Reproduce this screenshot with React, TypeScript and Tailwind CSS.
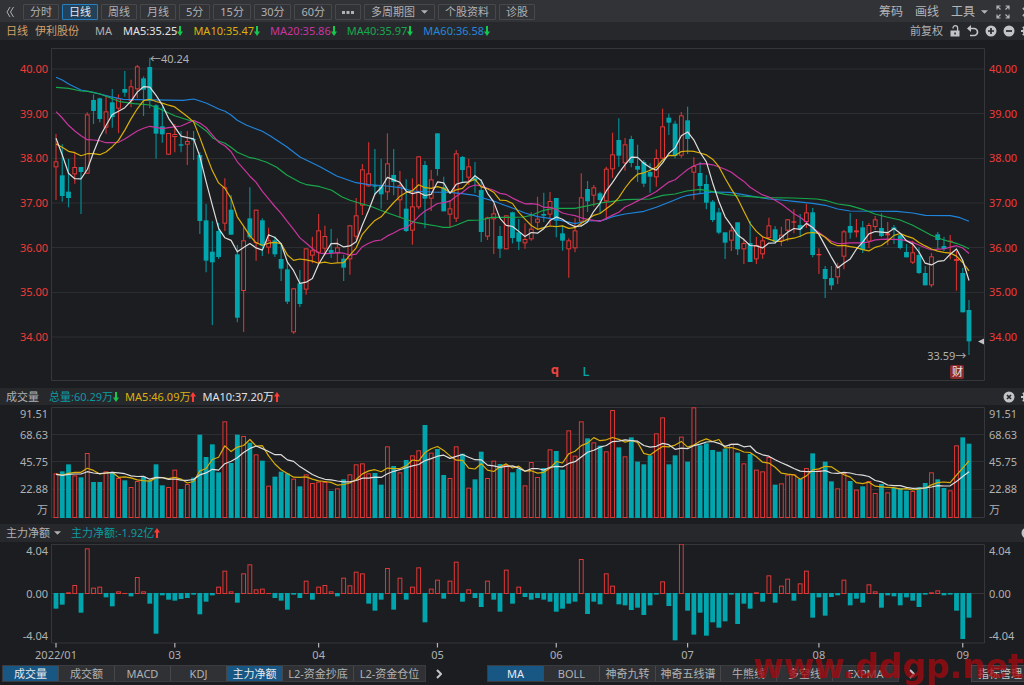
import type { ReactNode } from "react";

type Row = [dir: string, high: number, top: number, bottom: number, low: number];

type Candle = {
  up: boolean;
  high: number;
  top: number;
  bottom: number;
  low: number;
};

const STEP = 6.2534;
const FIRST_X = 56;

const xAt = (i: number) => FIRST_X + i * STEP;

// rows are kept at three units per pixel, counted from the block's own base
function block(base: number, rows: Row[]): Candle[] {
  return rows.map(([dir, high, top, bottom, low]) => ({
    up: dir === "r",
    high: base + high / 3,
    top: base + top / 3,
    bottom: base + bottom / 3,
    low: base + low / 3,
  }));
}

const CANDLES: Candle[] = [
  ...block(45, [
    ["r", 267, 349, 367, 465], ["g", 298, 391, 453, 470], ["g", 342, 440, 459, 487],
    ["r", 320, 366, 388, 416], ["g", 366, 366, 381, 507], ["r", 202, 208, 386, 386],
    ["g", 148, 165, 198, 237], ["g", 158, 160, 222, 232], ["r", 150, 199, 248, 266],
    ["g", 132, 172, 216, 248], ["r", 148, 160, 191, 264], ["g", 78, 132, 143, 155],
    ["r", 104, 124, 168, 187], ["r", 60, 64, 133, 160], ["g", 94, 100, 134, 213],
    ["g", 38, 66, 168, 190], ["g", 178, 181, 266, 341], ["g", 185, 244, 268, 293],
    ["r", 264, 264, 329, 329], ["r", 237, 267, 276, 322], ["g", 258, 298, 302, 322],
    ["r", 258, 288, 299, 360], ["g", 258, 282, 286, 345], ["g", 322, 330, 528, 567],
    ["g", 477, 526, 647, 682], ["g", 528, 620, 652, 840], ["g", 534, 558, 636, 642],
    ["r", 400, 427, 536, 558], ["g", 450, 494, 569, 569], ["g", 600, 628, 818, 832],
    ["r", 546, 586, 738, 861], ["g", 427, 520, 577, 582], ["r", 494, 494, 594, 647],
    ["g", 520, 526, 602, 633], ["r", 548, 586, 608, 626], ["g", 574, 586, 628, 636],
  ]),
  ...block(100, [
    ["g", 432, 477, 506, 543], ["g", 490, 508, 605, 612], ["r", 565, 565, 697, 702],
    ["g", 510, 550, 612, 621], ["r", 445, 445, 569, 584], ["r", 410, 451, 467, 490],
    ["r", 342, 391, 458, 490], ["r", 377, 408, 446, 466], ["g", 387, 450, 459, 474],
    ["r", 415, 442, 460, 488], ["g", 464, 476, 503, 543], ["r", 376, 376, 478, 524],
    ["r", 294, 346, 410, 420], ["r", 192, 208, 317, 345], ["r", 127, 220, 259, 260],
    ["g", 147, 256, 260, 286], ["g", 176, 259, 283, 326], ["r", 100, 190, 277, 300],
    ["g", 147, 225, 246, 286], ["r", 213, 256, 301, 353], ["g", 238, 326, 393, 396],
    ["r", 235, 319, 392, 434], ["r", 169, 169, 322, 328], ["g", 183, 195, 296, 385],
    ["r", 210, 238, 296, 333], ["g", 100, 100, 207, 227], ["g", 230, 262, 334, 334],
    ["r", 300, 325, 344, 382], ["r", 150, 160, 356, 366], ["g", 168, 171, 210, 246],
    ["r", 176, 199, 233, 255], ["g", 186, 233, 242, 279], ["g", 237, 270, 396, 426],
    ["r", 350, 352, 410, 420], ["r", 312, 340, 358, 462], ["g", 378, 408, 446, 474],
  ]),
  ...block(90, [
    ["r", 376, 376, 478, 478], ["g", 365, 367, 444, 460], ["g", 387, 427, 455, 480],
    ["r", 400, 447, 460, 476], ["r", 367, 416, 448, 452], ["r", 320, 386, 398, 418],
    ["g", 308, 372, 377, 396], ["r", 306, 333, 374, 408], ["g", 324, 324, 392, 442],
    ["g", 406, 430, 452, 482], ["r", 445, 451, 478, 563], ["r", 385, 421, 475, 487],
    ["r", 250, 322, 395, 410], ["g", 273, 297, 334, 366], ["r", 285, 292, 317, 350],
    ["g", 305, 310, 330, 370], ["r", 230, 236, 334, 390], ["r", 128, 193, 238, 264],
    ["g", 85, 150, 197, 230], ["r", 144, 163, 220, 242], ["g", 137, 147, 219, 232],
    ["g", 164, 228, 239, 276], ["g", 210, 216, 281, 291], ["g", 220, 246, 260, 308],
    ["r", 178, 204, 262, 290], ["r", 56, 109, 206, 206], ["g", 71, 83, 98, 135],
    ["g", 92, 101, 198, 205], ["r", 66, 76, 197, 203], ["g", 50, 91, 147, 192],
    ["r", 202, 228, 248, 329], ["g", 216, 249, 288, 312], ["g", 255, 282, 338, 358],
    ["g", 330, 335, 390, 396], ["g", 354, 367, 428, 433], ["g", 427, 427, 458, 507],
    ["r", 410, 421, 452, 483], ["g", 397, 397, 478, 495],
  ]),
  ...block(170, [
    ["r", 206, 219, 238, 282], ["g", 153, 219, 276, 276], ["r", 201, 225, 268, 282],
    ["r", 198, 211, 253, 266], ["r", 143, 166, 204, 208], ["g", 168, 178, 216, 222],
    ["r", 170, 194, 212, 228], ["r", 147, 148, 182, 214], ["r", 118, 154, 158, 190],
    ["g", 132, 165, 178, 202], ["r", 102, 127, 156, 174], ["g", 114, 127, 255, 262],
    ["r", 235, 252, 256, 312], ["g", 288, 297, 327, 384], ["g", 288, 324, 346, 360],
    ["r", 278, 289, 322, 342], ["r", 180, 184, 260, 298], ["g", 129, 168, 188, 206],
    ["r", 147, 181, 187, 202], ["g", 153, 172, 240, 249], ["r", 159, 165, 215, 235],
    ["r", 138, 148, 171, 180], ["g", 130, 174, 198, 202], ["r", 156, 190, 196, 226],
    ["g", 165, 172, 178, 222], ["g", 190, 196, 234, 238], ["g", 222, 246, 262, 262],
    ["r", 212, 247, 278, 282], ["g", 232, 255, 309, 312], ["g", 288, 309, 346, 346],
    ["r", 249, 259, 346, 352], ["g", 186, 193, 210, 236], ["g", 200, 228, 237, 243],
    ["r", 195, 212, 216, 268], ["r", 243, 267, 273, 362], ["g", 294, 309, 427, 427],
    ["g", 390, 420, 514, 555],
  ]),
];

const VOLUMES = [
  265, 259, 238, 271, 277, 204, 291, 291, 259, 264, 279, 286, 306, 288, 275, 286, 238, 301, 306, 254,
  312, 297, 278, 149, 216, 178, 262, 109, 234, 149, 153, 173, 208, 227, 302, 275, 260, 265, 281, 304,
  268, 294, 290, 291, 318, 310, 283, 268, 238, 235, 265, 264, 299, 184, 243, 262, 225, 211, 196, 120,
  203, 192, 270, 279, 184, 206, 308, 283, 200, 279, 227, 237, 240, 262, 252, 301, 231, 276, 249, 193,
  198, 254, 136, 212, 109, 160, 172, 182, 199, 75, 187, 214, 157, 230, 238, 211, 145, 97, 238, 211,
  155, 230, 67, 181, 175, 195, 200, 191, 176, 203, 235, 207, 254, 259, 216, 299, 295, 269, 268, 282,
  249, 205, 254, 230, 289, 310, 264, 288, 314, 304, 288, 324, 297, 322, 309, 309, 317, 318, 307, 294,
  262, 283, 309, 316, 181, 157, 176,
].map((v) => 385 + v / 3);

const NET_FLOWS = [
  251, 239, 202, 180, 263, 70, 188, 185, 217, 244, 199, 204, 214, 156, 199, 236, 326, 211, 224, 227,
  222, 219, 209, 268, 230, 211, 185, 137, 199, 233, 145, 118, 193, 191, 204, 219, 227, 254, 209, 219,
  167, 224, 185, 180, 199, 214, 158, 181, 140, 145, 236, 257, 224, 129, 254, 158, 224, 185, 127, 292,
  191, 164, 221, 167, 110, 230, 193, 219, 246, 167, 224, 260, 134, 236, 185, 216, 224, 219, 224, 230,
  260, 251, 236, 230, 102, 267, 230, 238, 145, 182, 238, 241, 255, 248, 270, 241, 209, 169, 243, 346,
  56, 257, 329, 263, 332, 292, 308, 289, 209, 297, 236, 251, 202, 230, 151, 233, 182, 161, 227, 175,
  137, 278, 217, 272, 216, 211, 164, 241, 221, 233, 178, 199, 248, 211, 214, 241, 217, 227, 246, 209,
  202, 196, 211, 209, 257, 342, 278,
].map((v) => 525 + v / 3);

const MA40 =
  "56,87.3 68.7,88.3 81,91 88.3,91.3 100,94 110,97.7 120,101.7 134.3,103.7 150,105 160,109 174.7,115.7 193.7,121.7 206,130.7 213.3,138.3 218.7,141 225,143.3 231,147.3 237.3,152.3 250,157.7 256,158.7 266.7,162.3 276.7,167.3 286.7,175 300,182.3 306.7,184.7 320,186.7 331.7,190.3 341.7,196.7 350,200.3 360,203.3 370,206 380,210 390,213.7 400,217.3 410,220.7 416.7,222.7 426.7,224.3 436.7,226 443.3,227.3 450,227.3 456.7,225 468.3,220.3 481.3,220 491.7,217.3 510,217.3 523.3,217 531.3,215.3 543.7,210.3 553.3,208.3 575,208.3 588.3,205.7 600,203 612.7,201.3 625,199.7 650,199 662.7,195.3 675,194 686.7,191 700,189.3 712.7,191.7 725,194.3 740,196 750,196.7 763,197.7 793,198 816.7,199 826.7,200.7 837.7,204 850,205.7 862.7,209.3 875,214 886.7,217 900,220 912.7,225.3 931.3,235.3 944,240 956.3,243.3 963.3,246 969,248.7";

const MA60 =
  "56,77.3 62.3,80 68.7,84 74.7,87 81,90 93.3,92.3 110,96.7 123.3,99.3 183.3,100.3 193.7,99 200,101 206.7,103.3 218.7,109 225,111.3 231,115 237.3,120.3 246.7,125.3 262.3,131.3 270,135.7 286.7,146.7 300,157 320,166.7 336.7,176 356,182.7 368.7,184.7 386.7,186 400,187.7 412.3,191 431.3,192 450,192.3 462.3,193.7 475,195.3 481.3,197.7 493.7,201 503.3,204.7 512.3,208 525,213 537.7,216.7 556.3,219.3 575,223.7 587.7,221 603.3,220.3 612.7,216.7 625,214 644,211.3 656.3,207.3 669,202.3 681.3,197.3 687.7,195.3 700,193.7 713.3,192 730,192.3 743.3,194.7 756.7,197 769,199 781.3,200 794,201.3 812.7,203.3 825.3,205.3 837.7,209 850,211 896.7,211.3 912.7,213 925.3,215.3 950.3,215.7 960,217.7 969,221.3";

// seed holds the points for which there is not enough history yet
function average(values: number[], n: number, base: number, seed: number[]) {
  return values
    .map((_, i) => {
      const y =
        i < n - 1
          ? base + seed[i] / 3
          : values.slice(i - n + 1, i + 1).reduce((a, b) => a + b, 0) / n;
      return `${xAt(i).toFixed(1)},${y.toFixed(1)}`;
    })
    .join(" ");
}

const CLOSES = CANDLES.map((c) => (c.up ? c.top : c.bottom));

const PRICE_LINES = [
  { color: "#1e84dc", points: MA60 },
  { color: "#17a84c", points: MA40 },
  {
    color: "#c9359f",
    points: average(CLOSES, 20, 45, [
      200, 219, 241, 258, 272, 284, 285, 287, 293, 293, 292, 282, 270, 258, 250, 244, 247, 251, 248,
    ]),
  },
  {
    color: "#d9ae0a",
    points: average(CLOSES, 10, 45, [297, 307, 319, 323, 332, 326, 326, 329, 321]),
  },
  { color: "#dedede", points: average(CLOSES, 5, 45, [280, 330, 385, 401]) },
];

const VOLUME_LINES = [
  { color: "#d9ae0a", points: average(VOLUMES, 5, 385, [267, 270, 265, 262]) },
  {
    color: "#dedede",
    points: average(VOLUMES, 10, 385, [268, 271, 268, 267, 267, 260, 264, 266, 264]),
  },
];

const MONTHS = [
  { i: 0, label: "2022/01" },
  { i: 19, label: "03" },
  { i: 42, label: "04" },
  { i: 61, label: "05" },
  { i: 80, label: "06" },
  { i: 101, label: "07" },
  { i: 122, label: "08" },
  { i: 145, label: "09" },
];

const PRICES = ["40.00", "39.00", "38.00", "37.00", "36.00", "35.00", "34.00"];
const VOLUME_TICKS = ["91.51", "68.63", "45.75", "22.88", "万"];
const FLOW_TICKS = ["4.04", "0.00", "-4.04"];

const PERIODS = ["分时", "日线", "周线", "月线", "5分", "15分", "30分", "60分"];

const LEGEND = [
  { text: "MA5:35.25", className: "text-[#e2e2e2]" },
  { text: "MA10:35.47", className: "text-[#dcb10c]" },
  { text: "MA20:35.86", className: "text-[#c9359f]" },
  { text: "MA40:35.97", className: "text-[#18a84c]" },
  { text: "MA60:36.58", className: "text-[#2388dc]" },
];

const LEFT_TABS = [
  { label: "成交量", active: true, width: "w-14" },
  { label: "成交额", width: "w-14" },
  { label: "MACD", width: "w-14" },
  { label: "KDJ", width: "w-14" },
  { label: "主力净额", active: true, width: "w-14" },
  { label: "L2-资金抄底", width: "w-[71px]" },
  { label: "L2-资金仓位", width: "w-[71px]" },
];

const RIGHT_TABS = [
  { label: "MA", active: true, width: "w-14" },
  { label: "BOLL", width: "w-14" },
  { label: "神奇九转", width: "w-14" },
  { label: "神奇五线谱", width: "w-[65px]" },
  { label: "牛熊线", width: "w-14" },
  { label: "多空线", width: "w-14" },
  { label: "EXPMA", width: "w-[65px]" },
];

function Trend({ up }: { up?: boolean }) {
  return (
    <svg
      viewBox="0 0 6 12"
      className={`h-3 w-1.5 shrink-0 ${up ? "rotate-180 text-[#ff3b35]" : "text-[#14c74f]"}`}
      aria-hidden
    >
      <path d="M2 1h2v5.500h2L3 11 0 6.500h2z" fill="currentColor" />
    </svg>
  );
}

function Caret() {
  return (
    <svg viewBox="0 0 8 4" className="h-1 w-[7px]" aria-hidden>
      <path d="M0 0h8L4 4z" fill="currentColor" />
    </svg>
  );
}

function Chevron() {
  return (
    <svg viewBox="0 0 6 10" className="h-2.5 w-1.5" aria-hidden>
      <path d="M1 1l4 4-4 4" fill="none" stroke="currentColor" strokeWidth="2" />
    </svg>
  );
}

function Gear() {
  return (
    <svg viewBox="0 0 12 12" className="h-3 w-3" aria-hidden>
      <circle cx="6" cy="6" r="3.300" fill="none" stroke="currentColor" strokeWidth="2" />
      <path
        d="M6 0v2.500M6 9.500V12M0 6h2.500M9.500 6H12M1.800 1.800l1.700 1.700M8.500 8.500l1.700 1.700M10.200 1.800L8.500 3.500M3.500 8.500l-1.700 1.700"
        stroke="currentColor"
        strokeWidth="1.800"
      />
    </svg>
  );
}

function RoundIcon({ path }: { path: string }) {
  return (
    <svg viewBox="0 0 12 12" className="h-3 w-3" aria-hidden>
      <circle cx="6" cy="6" r="5.500" fill="currentColor" />
      <path d={path} stroke="#27282c" strokeWidth="1.700" fill="none" />
    </svg>
  );
}

function IconButton({ label, children }: { label: string; children: ReactNode }) {
  return (
    <button type="button" aria-label={label} className="flex shrink-0 items-center">
      {children}
    </button>
  );
}

function Toolbar() {
  const base =
    "flex h-4 items-center justify-center rounded-[1px] border px-1.5 whitespace-nowrap";
  const idle = "border-[#47484c] text-[#b0b1b3]";

  return (
    <div className="flex h-[22px] items-center justify-between bg-[#323337] pt-0.5">
      <div className="flex items-center gap-[3px] pl-1.5">
        <IconButton label="收起">
          <svg viewBox="0 0 8 12" className="mr-1.5 h-3 w-2" aria-hidden>
            <path d="M4 1L1 6l3 5M7.500 1l-3 5 3 5" fill="none" stroke="#b0b1b3" />
          </svg>
        </IconButton>
        {PERIODS.map((period) => (
          <button
            key={period}
            type="button"
            className={`${base} ${
              period === "日线" ? "border-[#2480c0] bg-[#22415a] text-[#e4e8ec]" : idle
            }`}
          >
            {period}
          </button>
        ))}
        <button type="button" aria-label="更多周期" className={`${base} ${idle}`}>
          <svg viewBox="0 0 12 3" className="h-[3px] w-3" aria-hidden>
            <path d="M0 0h3v3H0zM4.500 0h3v3h-3zM9 0h3v3H9z" fill="currentColor" />
          </svg>
        </button>
        <button type="button" className={`${base} ${idle} gap-1.5`}>
          多周期图
          <Caret />
        </button>
        <button type="button" className={`${base} ${idle}`}>
          个股资料
        </button>
        <button type="button" className={`${base} ${idle}`}>
          诊股
        </button>
      </div>
      <div className="-mr-1 flex items-center gap-3 text-xs text-[#b4b5b7]">
        <button type="button">筹码</button>
        <button type="button">画线</button>
        <button type="button" className="flex items-center gap-1.5">
          工具
          <Caret />
        </button>
        <div className="flex items-center gap-3">
          <IconButton label="全屏">
            <svg viewBox="0 0 14 14" className="-ml-1 h-3.5 w-3.5" aria-hidden>
              <path
                d="M1 4.500V1h3.500M1 1l3.500 3.500M9.500 1H13v3.500M13 1L9.500 4.500M1 9.500V13h3.500M1 13l3.500-3.500M13 9.500V13H9.500M13 13L9.500 9.500"
                fill="none"
                stroke="currentColor"
                strokeWidth="1.200"
              />
            </svg>
          </IconButton>
          <IconButton label="展开">
            <Chevron />
          </IconButton>
        </div>
      </div>
    </div>
  );
}

function Legend() {
  return (
    <div className="flex h-[18px] items-center justify-between bg-[#27282c]">
      <div className="flex items-center whitespace-nowrap pl-1.5">
        <span className="mr-[7px] text-[#d3a06c]">日线</span>
        <span className="mr-4 text-[#d3a06c]">伊利股份</span>
        <span className="mr-[11px]">MA</span>
        <div className="flex gap-2.5">
          {LEGEND.map((item) => (
            <span key={item.text} className={`flex items-center ${item.className}`}>
              {item.text}
              <Trend />
            </span>
          ))}
        </div>
      </div>
      <div className="-mr-[9px] flex items-center gap-1.5 text-[#c3c4c6]">
        <button type="button" className="text-[#b0b1b3]">
          前复权
        </button>
        <IconButton label="锁定">
          <svg viewBox="0 0 12 12" className="h-3 w-3" aria-hidden>
            <path d="M1.500 5.500h9v6h-9z" fill="currentColor" />
            <path d="M4 3.500V3a2.300 2.300 0 0 1 4.600 0v3" fill="none" stroke="currentColor" strokeWidth="1.300" />
            <path d="M5.300 7.500h1.500v2H5.300z" fill="#27282c" />
          </svg>
        </IconButton>
        <IconButton label="撤销">
          <svg viewBox="0 0 12 12" className="h-3 w-3" aria-hidden>
            <path d="M1.500 3.500H7a3.200 3.200 0 0 1 0 7H3" fill="none" stroke="currentColor" strokeWidth="1.700" />
            <path d="M0 3.500L4 0v7z" fill="currentColor" />
          </svg>
        </IconButton>
        <IconButton label="放大">
          <RoundIcon path="M6 3v6M3 6h6" />
        </IconButton>
        <IconButton label="缩小">
          <RoundIcon path="M3 6h6" />
        </IconButton>
        <IconButton label="设置">
          <Gear />
        </IconButton>
      </div>
    </div>
  );
}

function Lines({ lines }: { lines: { color: string; points: string }[] }) {
  return (
    <>
      {lines.map((line) => (
        <polyline
          key={line.points}
          points={line.points}
          fill="none"
          stroke={line.color}
          strokeWidth="1.200"
          strokeLinejoin="round"
        />
      ))}
    </>
  );
}

function Bar({ x, top, bottom, up }: { x: number; top: number; bottom: number; up: boolean }) {
  if (up && bottom - top > 1.8) {
    return (
      <rect
        x={x - 1.9}
        y={top + 0.5}
        width={3.8}
        height={bottom - top - 1}
        fill="#1c1d20"
        stroke="#e03836"
      />
    );
  }
  return (
    <rect
      x={x - 2.4}
      y={top}
      width={4.8}
      height={Math.max(bottom - top, 1)}
      fill={up ? "#e03836" : "#00a5ad"}
    />
  );
}

function PriceChart() {
  return (
    <svg
      viewBox="51 48 934 333"
      preserveAspectRatio="none"
      className="h-[333px] w-full"
      role="img"
      aria-label="日线"
    >
      <path
        d="M51 69h934M51 113.500h934M51 158.500h934M51 203h934M51 247.500h934M51 292.500h934M51 337h934"
        stroke="#2d2e31"
      />
      <path d="M51.500 48.500h933v332h-933z" fill="none" stroke="#36373a" />
      {CANDLES.map((c, i) => (
        <g key={i}>
          <path
            d={`M${xAt(i)} ${c.high}V${c.low}`}
            stroke={c.up ? "#c93130" : "#028b92"}
            strokeWidth="1.200"
          />
          <Bar x={xAt(i)} top={c.top} bottom={c.bottom} up={c.up} />
        </g>
      ))}
      <Lines lines={PRICE_LINES} />
      <path d="M978 341.500l6-3v6z" fill="#c3c4c6" />
    </svg>
  );
}

function VolumeChart() {
  return (
    <svg
      viewBox="51 407 934 111"
      preserveAspectRatio="none"
      className="h-[111px] w-full"
      role="img"
      aria-label="成交量"
    >
      <path d="M51 434.500h934M51 461.500h934M51 489.500h934" stroke="#2d2e31" />
      <path d="M51.500 407.500h933v110h-933z" fill="none" stroke="#36373a" />
      {VOLUMES.map((top, i) => (
        <Bar key={i} x={xAt(i)} top={top} bottom={518} up={CANDLES[i].up} />
      ))}
      <Lines lines={VOLUME_LINES} />
    </svg>
  );
}

function FlowChart() {
  return (
    <svg
      viewBox="51 544 934 104"
      preserveAspectRatio="none"
      className="h-[104px] w-full"
      role="img"
      aria-label="主力净额"
    >
      <path d="M51 593.500h934" stroke="#36373a" />
      <path d="M51.500 544.500h933v98.500h-933z" fill="none" stroke="#36373a" />
      {NET_FLOWS.map((y, i) =>
        y < 593.2 ? (
          <Bar key={i} x={xAt(i)} top={y} bottom={594} up />
        ) : (
          <Bar key={i} x={xAt(i)} top={593} bottom={y} up={false} />
        ),
      )}
      {MONTHS.map((m) => (
        <path key={m.i} d={`M${xAt(m.i)} 643v4.500`} stroke="#b4b5b7" strokeWidth="1.200" />
      ))}
    </svg>
  );
}

type PanelProps = {
  className: string;
  axisClassName: string;
  ticks: string[];
  children: ReactNode;
};

function Panel({ className, axisClassName, ticks, children }: PanelProps) {
  const labels = ticks.map((tick) => (
    <span key={tick} className="flex items-center leading-[14px]">
      {tick}
    </span>
  ));

  return (
    <div className={`flex ${className}`}>
      <div className={`w-[51px] shrink-0 justify-items-end pr-[3px] ${axisClassName}`}>
        {labels}
      </div>
      <div className="relative min-w-0 flex-1">{children}</div>
      <div className={`w-[39px] shrink-0 justify-items-start pl-1 ${axisClassName}`}>
        {labels}
      </div>
    </div>
  );
}

type Tab = { label: string; width: string; active?: boolean };

function Tabs({ tabs }: { tabs: Tab[] }) {
  return (
    <div className="flex h-[17px] border border-[#3b3c40]">
      {tabs.map((tab) => (
        <button
          key={tab.label}
          type="button"
          className={`flex shrink-0 items-center justify-center border-r border-[#46474b] whitespace-nowrap last:border-r-0 ${tab.width} ${
            tab.active ? "bg-[#185684] text-[#e6eaee]" : "bg-[#303135] text-[#b0b1b3]"
          }`}
        >
          {tab.label}
        </button>
      ))}
    </div>
  );
}

export default function App() {
  return (
    <div className="relative min-h-screen overflow-hidden bg-[#1c1d20] font-['Noto_Sans','Noto_Sans_CJK_SC',sans-serif] text-[11px] leading-[14px] text-[#b0b1b3]">
      <Toolbar />
      <Legend />

      <Panel
        className="pt-2 pb-[7px]"
        axisClassName="grid content-between h-[296px] pt-3.5 text-[#f03a38]"
        ticks={PRICES}
      >
        <PriceChart />
        <span className="absolute top-1 left-[10.6%]">←40.24</span>
        <span className="absolute top-[301px] right-[2%]">33.59→</span>
        <span className="absolute top-[314px] left-[53.5%] text-[13px] font-bold text-[#f04340]">
          q
        </span>
        <span className="absolute top-[316px] left-[56.9%] text-[13px] font-medium text-[#00a5ad]">
          L
        </span>
        <span className="absolute top-[317px] right-[2.2%] flex h-3.5 w-3.5 items-center justify-center rounded-[2px] bg-[#8c2a2a] text-[#f0e6e6]">
          财
        </span>
      </Panel>

      <div className="flex h-[17px] items-center justify-between bg-[#27282c] pl-1.5">
        <div className="flex items-center whitespace-nowrap">
          <span className="mr-2.5">成交量</span>
          <span className="mr-1.5 flex items-center text-[#0a9ba2]">
            总量:60.29万
            <Trend />
          </span>
          <span className="mr-1.5 flex items-center text-[#dcb10c]">
            MA5:46.09万
            <Trend up />
          </span>
          <span className="flex items-center text-[#e2e2e2]">
            MA10:37.20万
            <Trend up />
          </span>
        </div>
        <div className="-mr-[9px] flex gap-1.5 text-[#c3c4c6]">
          <IconButton label="关闭成交量">
            <RoundIcon path="M4 4l4 4M8 4l-4 4" />
          </IconButton>
          <IconButton label="成交量设置">
            <Gear />
          </IconButton>
        </div>
      </div>

      <Panel
        className="pt-0.5 pb-1.5"
        axisClassName="grid grid-rows-[14px_27px_27px_27px_16px]"
        ticks={VOLUME_TICKS}
      >
        <VolumeChart />
      </Panel>

      <div className="flex h-[18px] items-center justify-between bg-[#27282c] pl-1.5">
        <div className="flex items-center whitespace-nowrap">
          <button type="button" className="mr-2.5 flex items-center gap-1">
            主力净额
            <Caret />
          </button>
          <span className="flex items-center text-[#0a9ba2]">
            主力净额:-1.92亿
            <Trend up />
          </span>
        </div>
        <div className="-mr-[9px] text-[#c3c4c6]">
          <IconButton label="关闭主力净额">
            <RoundIcon path="M4 4l4 4M8 4l-4 4" />
          </IconButton>
        </div>
      </div>

      <Panel
        className="pt-0.5"
        axisClassName="grid content-between h-[99px]"
        ticks={FLOW_TICKS}
      >
        <FlowChart />
        <div className="relative h-[17px]">
          {MONTHS.map((m) => (
            <span
              key={m.i}
              className="absolute -translate-x-1/2"
              style={{ left: `${((xAt(m.i) - 51) / 934) * 100}%` }}
            >
              {m.label}
            </span>
          ))}
        </div>
      </Panel>

      <div className="flex items-center justify-between border-b border-[#2d2e31] pb-[3px] pl-0.5">
        <div className="flex items-center gap-2.5 text-[#c3c4c6]">
          <Tabs tabs={LEFT_TABS} />
          <IconButton label="更多指标">
            <Chevron />
          </IconButton>
        </div>
        <div className="flex items-center gap-2.5 text-[#c3c4c6]">
          <Tabs tabs={RIGHT_TABS} />
          <IconButton label="更多主图指标">
            <Chevron />
          </IconButton>
          <button
            type="button"
            className="-mr-[5px] ml-[46px] h-[17px] border border-[#46474b] bg-[#303135] px-1.5 leading-[15px] text-[#c3c4c6]"
          >
            指标管理
          </button>
        </div>
      </div>

      <span className="pointer-events-none absolute top-[650px] left-[753px] font-['DejaVu_Sans',sans-serif] text-[33px] leading-[33px] font-bold text-[#a50a0f]/75">
        www.ddgp.net
      </span>
    </div>
  );
}
